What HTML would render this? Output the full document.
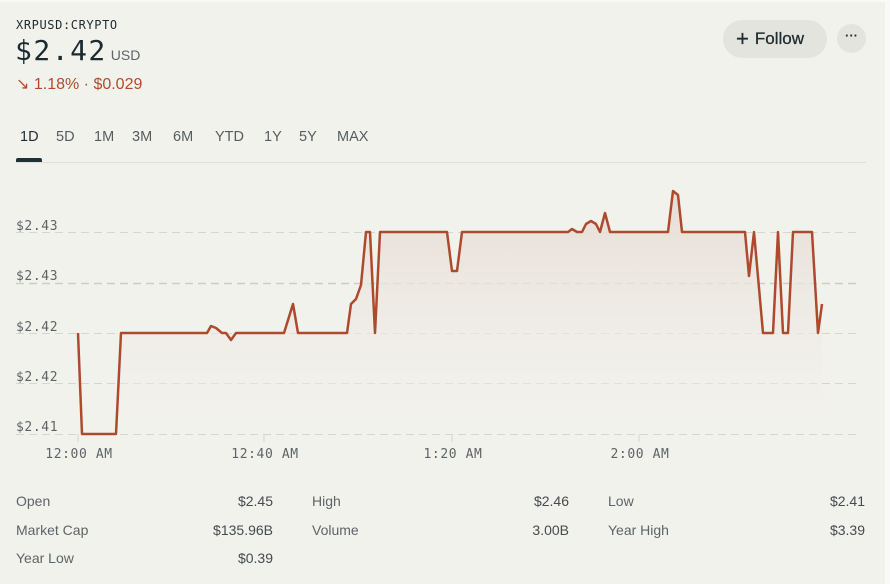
<!DOCTYPE html>
<html><head><meta charset="utf-8"><style>
*{margin:0;padding:0;box-sizing:border-box}
html,body{width:890px;height:584px;overflow:hidden;background:#f9f9f7}
.page{position:absolute;left:0;top:2px;width:885px;height:582px;background:#f2f2ed;font-family:"Liberation Sans",sans-serif;color:#2a3438}
.mono{font-family:"DejaVu Sans Mono","Liberation Mono",monospace}
.abs{position:absolute}
.tab{position:absolute;top:127px;font-size:14.5px;color:#555d60}
.lbl{position:absolute;font-size:14px;color:#5d6467}
.val{position:absolute;font-size:14px;color:#444b4e;text-align:right}
</style></head><body>
<div class="page">
<div class="abs mono" style="left:16px;top:16px;font-size:12px;letter-spacing:0.6px;color:#1f2a2e">XRPUSD:CRYPTO</div>
<div class="abs mono" style="left:15px;top:32px;font-size:28px;letter-spacing:1.5px;color:#1a2a30">$2.42<span style="font-family:'Liberation Sans',sans-serif;font-size:14px;letter-spacing:0;color:#5d6467;margin-left:4px">USD</span></div>
<div class="abs" style="left:16px;top:72px;font-size:16px;color:#b14a2a">↘ 1.18% · $0.029</div>
<div class="abs" style="left:723px;top:18px;width:104px;height:38px;border-radius:19px;background:#e4e4de;font-size:17px;color:#1f2c30;line-height:38px;padding-left:13px;-webkit-text-stroke:0.3px #1f2c30"><span style="font-size:22px;vertical-align:-2px;margin-right:6px">+</span>Follow</div>
<div class="abs" style="left:837px;top:22px;width:29px;height:29px;border-radius:50%;background:#e4e4de;text-align:center;line-height:29px;font-size:13px;font-weight:bold;color:#1f2c30"><span style="position:relative;top:-3px">···</span></div>
<div class="tab" style="left:20px;color:#1f2c30">1D</div>
<div class="tab" style="left:56px">5D</div>
<div class="tab" style="left:94px">1M</div>
<div class="tab" style="left:132px">3M</div>
<div class="tab" style="left:173px">6M</div>
<div class="tab" style="left:215px">YTD</div>
<div class="tab" style="left:264px">1Y</div>
<div class="tab" style="left:299px">5Y</div>
<div class="tab" style="left:337px">MAX</div>
<div class="abs" style="left:16px;top:160px;width:850px;height:1px;background:#dfdfda"></div>
<div class="abs" style="left:16px;top:156px;width:26px;height:4px;border-radius:2px 2px 0 0;background:#1e3236"></div>
</div>
<svg class="abs" style="position:absolute;left:0;top:0" width="890" height="584">
<defs><linearGradient id="g" x1="0" y1="0" x2="0" y2="1"><stop offset="0" stop-color="#e7ddd5"/><stop offset="1" stop-color="#f2f2ed" stop-opacity="0.3"/></linearGradient></defs>
<g stroke="#d6d5cf" stroke-width="1" stroke-dasharray="8,5">
<line x1="16" y1="232.5" x2="856" y2="232.5"/><line x1="16" y1="283.5" x2="856" y2="283.5" stroke="#cdccc5" stroke-width="1.5"/><line x1="16" y1="333.5" x2="856" y2="333.5"/><line x1="16" y1="383.5" x2="856" y2="383.5"/><line x1="16" y1="434.5" x2="856" y2="434.5"/>
</g>
<g stroke="#d6d5cf"><line x1="78" y1="434" x2="78" y2="442"/><line x1="264" y1="434" x2="264" y2="442"/><line x1="452" y1="434" x2="452" y2="442"/><line x1="639" y1="434" x2="639" y2="442"/></g>
<path d="M78,333 L82,434 116,434 121,333 207,333 211,326 216,328 222,333 226,333 231,340 236,333 284,333 293,304 298,333 347,333 351,304 356,299 361,285 366,232 370,232 375,333 380,232 447,232 452,271 457,271 462,232 568,232 572,229 577,232 582,232 586,224 591,221 596,224 600,232 605,213 610,232 668,232 673,191 678,195 682,232 745,232 749,276 754,232 763,333 773,333 778,232 783,333 788,333 793,232 812,232 818,333 822,304 L822,434 78,434Z" fill="url(#g)"/>
<path d="M78,333 L82,434 116,434 121,333 207,333 211,326 216,328 222,333 226,333 231,340 236,333 284,333 293,304 298,333 347,333 351,304 356,299 361,285 366,232 370,232 375,333 380,232 447,232 452,271 457,271 462,232 568,232 572,229 577,232 582,232 586,224 591,221 596,224 600,232 605,213 610,232 668,232 673,191 678,195 682,232 745,232 749,276 754,232 763,333 773,333 778,232 783,333 788,333 793,232 812,232 818,333 822,304" fill="none" stroke="#ad4a2e" stroke-width="2.5" stroke-linejoin="round"/>
<g font-family="DejaVu Sans Mono,Liberation Mono,monospace" font-size="13" letter-spacing="0.6" fill="#5d6467">
<text x="16" y="230">$2.43</text><text x="16" y="280">$2.43</text><text x="16" y="331">$2.42</text><text x="16" y="381">$2.42</text><text x="16" y="431">$2.41</text>
<text x="79" y="458" text-anchor="middle">12:00 AM</text><text x="265" y="458" text-anchor="middle">12:40 AM</text><text x="453" y="458" text-anchor="middle">1:20 AM</text><text x="640" y="458" text-anchor="middle">2:00 AM</text>
</g>
</svg>
<div style="position:absolute;left:0;top:0;width:890px;font-family:'Liberation Sans',sans-serif">
<div class="lbl" style="left:16px;top:493px">Open</div><div class="val" style="left:173px;width:100px;top:493px">$2.45</div>
<div class="lbl" style="left:312px;top:493px">High</div><div class="val" style="left:469px;width:100px;top:493px">$2.46</div>
<div class="lbl" style="left:608px;top:493px">Low</div><div class="val" style="left:765px;width:100px;top:493px">$2.41</div>
<div class="lbl" style="left:16px;top:522px">Market Cap</div><div class="val" style="left:153px;width:120px;top:522px">$135.96B</div>
<div class="lbl" style="left:312px;top:522px">Volume</div><div class="val" style="left:469px;width:100px;top:522px">3.00B</div>
<div class="lbl" style="left:608px;top:522px">Year High</div><div class="val" style="left:765px;width:100px;top:522px">$3.39</div>
<div class="lbl" style="left:16px;top:550px">Year Low</div><div class="val" style="left:173px;width:100px;top:550px">$0.39</div>
</div>
</body></html>
